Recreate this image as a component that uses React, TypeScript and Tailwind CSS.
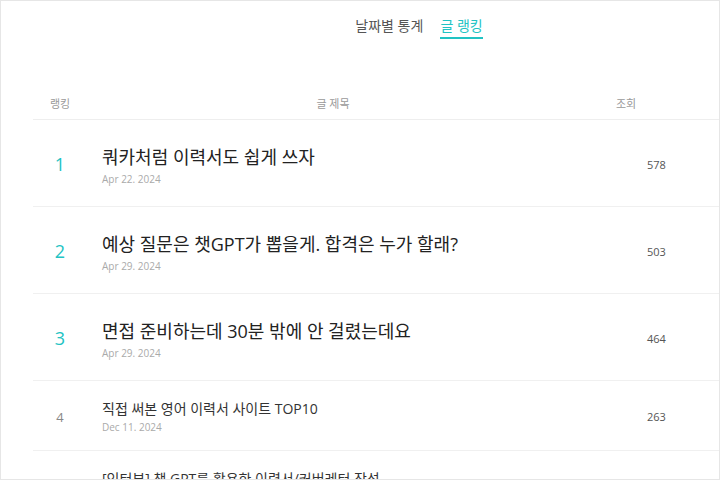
import React from "react";

// Post ranking tab — top posts by view count.

interface Post {
  rank: number;
  title: string;
  date: string;
  views: number;
}

const POSTS: Post[] = [
  { rank: 1, title: "쿼카처럼 이력서도 쉽게 쓰자", date: "Apr 22. 2024", views: 578 },
  { rank: 2, title: "예상 질문은 챗GPT가 뽑을게. 합격은 누가 할래?", date: "Apr 29. 2024", views: 503 },
  { rank: 3, title: "면접 준비하는데 30분 밖에 안 걸렸는데요", date: "Apr 29. 2024", views: 464 },
  { rank: 4, title: "직접 써본 영어 이력서 사이트 TOP10", date: "Dec 11. 2024", views: 263 },
  { rank: 5, title: "[인터뷰] 챗 GPT를 활용한 이력서/커버레터 작성", date: "Dec 02. 2024", views: 241 },
];

const FONT = "font-['Open_Sans','Noto_Sans_CJK_KR',sans-serif]";

export default function App() {
  return (
    <div className={`w-[720px] h-[480px] overflow-hidden bg-white border border-[#e6e6e6] ${FONT}`}>
      {/* Tabs */}
      <div className="flex justify-center gap-[17px] pl-[118px] pt-[15px]">
        <button className="text-[14px] leading-[20px] text-[#555] pb-[3px]">날짜별 통계</button>
        <button className="text-[14px] leading-[20px] text-[#22c3c3] pb-[1px] border-b-2 border-[#22c3c3]">글 랭킹</button>
      </div>

      {/* Table */}
      <div className="ml-[32px] mt-[48px]">
        <div className="flex items-center h-[33px] pt-[2px] border-b border-[#eeeeee] text-[11px] text-[#9a9a9a]">
          <span className="w-[54px] text-center">랭킹</span>
          <span className="w-[492px] text-center">글 제목</span>
          <span className="pl-[37px]">조회</span>
        </div>

        {POSTS.map(p => {
          const top = p.rank <= 3;
          return (
            <div
              key={p.rank}
              className={`flex items-center border-b border-[#f0f0f0] ${top ? "h-[87px]" : "h-[70px]"}`}
            >
              <span
                className={`w-[54px] text-center ${top ? "text-[18px] text-[#22c3c3] pt-[2px]" : "text-[13px] text-[#888] pt-[4px]"}`}
              >
                {p.rank}
              </span>
              <div className={`flex-1 pl-[15px] min-w-0 ${top ? "pt-[5px]" : "pt-[4px]"}`}>
                <p className={`truncate ${top ? "text-[18px] leading-[24px] text-[#222]" : "text-[14px] leading-[18px] text-[#333]"}`}>
                  {p.title}
                </p>
                <p className={`text-[10px] text-[#aaa] ${top ? "mt-[3px]" : "mt-[2px]"}`}>{p.date}</p>
              </div>
              <span className="w-[72px] text-[11px] text-[#555] pt-[4px]">{p.views}</span>
            </div>
          );
        })}
      </div>
    </div>
  );
}
